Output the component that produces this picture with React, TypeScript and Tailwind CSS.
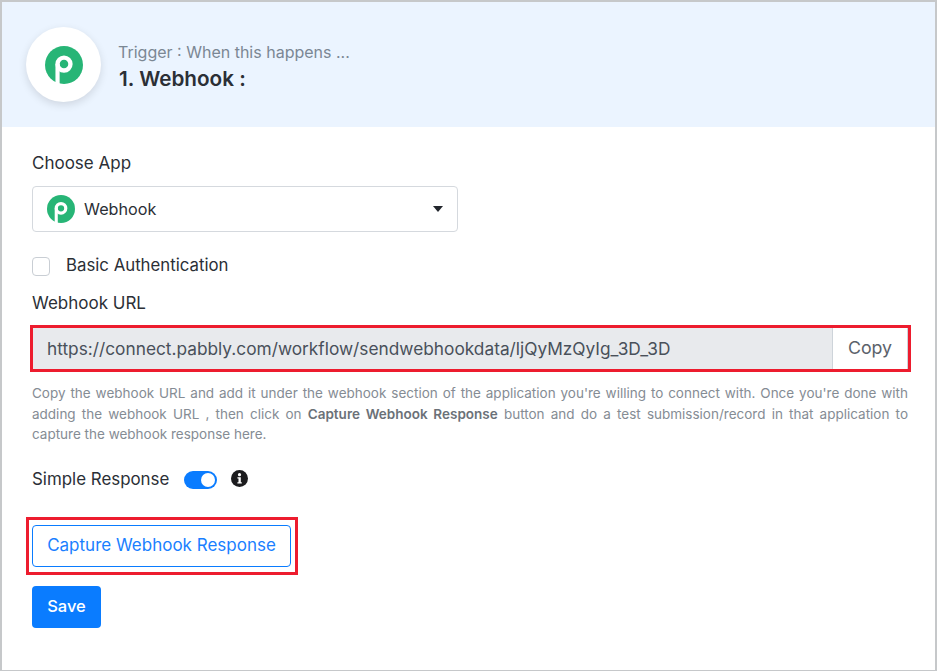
import React from "react";

function Logo({ size }: { size: number }) {
  return (
    <svg width={size} height={size} viewBox="0 0 40 40" className="shrink-0">
      <circle cx="20" cy="20" r="20" fill="#27b576" />
      <path d="M13.2 40V19" fill="none" stroke="#fff" strokeWidth="4.4" />
      <circle cx="20" cy="19" r="6.8" fill="none" stroke="#fff" strokeWidth="4.6" />
    </svg>
  );
}

export default function App() {
  return (
    <div className="h-[671px] w-[939px] overflow-hidden bg-white font-['Inter','Noto_Sans',sans-serif] text-[#2b2f36]">
      <div className="h-[671px] w-[937px] border-t-2 border-b border-l-2 border-r-2 border-[#c6c8ca]">
        <div className="flex h-[125px] items-center gap-[17px] bg-[#ebf4ff] pl-[24px]">
          <div className="flex h-[75px] w-[75px] items-center justify-center rounded-full bg-white shadow-[0_3px_8px_rgba(0,0,0,0.12)]">
            <Logo size={38} />
          </div>
          <div className="mt-[3px]">
            <div className="-mt-[1px] text-[16px] leading-[24px] text-[#7b8794]">Trigger : When this happens ...</div>
            <div className="mt-[2px] pl-[1px] text-[20.7px] font-semibold leading-[26px] text-[#2b2f36]">1. Webhook :</div>
          </div>
        </div>

        <div className="px-[30px] pt-[24px]">
          <div className="text-[17px] leading-[24px]">Choose App</div>
          <div className="mt-[11px] flex h-[46px] w-[426px] items-center gap-[9px] rounded border border-[#d5d9de] pl-[14px] pr-[14px]">
            <Logo size={28} />
            <span className="text-[16.2px]">Webhook</span>
            <span className="ml-auto h-0 w-0 border-x-[5.5px] border-t-[6px] border-x-transparent border-t-[#22262c]" />
          </div>

          <div className="mt-[24px] flex h-[20px] items-center">
            <span className="h-[19px] w-[18px] rounded border border-[#c9ced4] bg-white" />
            <span className="ml-[16px] text-[16.8px]">Basic Authentication</span>
          </div>

          <div className="mt-[15px] text-[17px] leading-[24px]">Webhook URL</div>

          <div className="-ml-[2px] mt-[10px] flex h-[47px] w-[881px] border-[3px] border-[#ed1c2e]">
            <div className="flex flex-1 items-center bg-[#e8eaed] pl-[14px] text-[17.3px] text-[#49505a]">
              https://connect.pabbly.com/workflow/sendwebhookdata/ljQyMzQyIg_3D_3D
            </div>
            <div className="flex w-[76px] items-center justify-center border-l border-r border-[#ced4da] text-[17.8px] text-[#5b626b]">
              Copy
            </div>
          </div>

          <p className="mt-[11px] w-[876px] text-justify text-[13.5px] leading-[20.5px] text-[#858c94]">
            Copy the webhook URL and add it under the webhook section of the application you're willing to connect with. Once you're done with adding the webhook URL , then click on <b className="font-semibold text-[#6b7178]">Capture Webhook Response</b> button and do a test submission/record in that application to capture the webhook response here.
          </p>

          <div className="mt-[25px] flex h-[20px] items-center">
            <span className="text-[16.9px]">Simple Response</span>
            <span className="ml-[15px] flex h-[18px] w-[33px] items-center justify-end rounded-full bg-[#0a7cff] pr-[2px]">
              <span className="h-[14px] w-[14px] rounded-full bg-white" />
            </span>
            <svg className="ml-[14px] -mt-[2px]" width="17" height="17" viewBox="0 0 17 17">
              <circle cx="8.5" cy="8.5" r="8.5" fill="#1c1c1e" />
              <circle cx="8.5" cy="4.7" r="1.6" fill="#fff" />
              <path d="M6.4 7.2h3.4v5h1v1.4H6.4v-1.4h1.1V8.6H6.4z" fill="#fff" />
            </svg>
          </div>

          <div className="-ml-[6px] mt-[27px] w-[272px] border-[3px] border-[#ed1c2e] px-[3px] py-[5px]">
            <button className="h-[42px] w-[259px] rounded border border-[#0a7cff] bg-white pt-[1px] text-[17px] text-[#1a7fff]">
              Capture Webhook Response
            </button>
          </div>

          <button className="mt-[11px] block h-[42px] w-[69px] rounded bg-[#0a7cff] text-[16.5px] font-medium text-white">
            Save
          </button>
        </div>
      </div>
    </div>
  );
}
